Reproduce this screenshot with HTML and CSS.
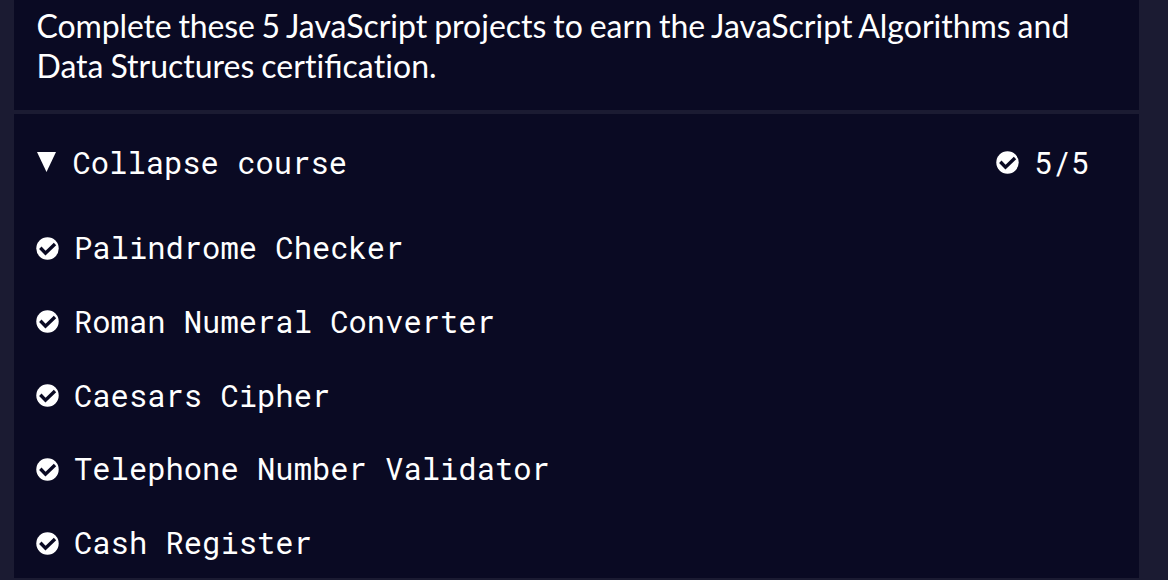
FILE: index.html
```html
<!DOCTYPE html>
<html lang="en">
<head>
<meta charset="utf-8">
<title>Projects</title>
<link rel="stylesheet" href="styles.css">
</head>
<body>
<svg class="defs" width="0" height="0"><symbol id="check" viewBox="0 0 23 23"><circle class="disc" cx="11.5" cy="11.5" r="11.2"/><path class="tick" d="M4.300 10.800 9.500 16.200 19 7"/></symbol></svg>
<main class="block">
<p class="intro"><span class="lead">Complete these 5</span> JavaScript projects to earn the JavaScript Algorithms and<br>Data Structures <span class="plain">certi</span>fica<span class="plain">tion.</span></p>
<section class="course">
<div class="toggle"><svg class="arrow" viewBox="0 0 19 20"><path d="M0 0h19L9.500 20z"/></svg><span class="label">Collapse course</span><svg class="icon"><use href="#check"/></svg><span class="count">5/5</span></div>
<ul class="list">
<li><svg class="icon"><use href="#check"/></svg><span class="name">Palindrome Checker</span></li>
<li><svg class="icon"><use href="#check"/></svg><span class="name">Roman Numeral Converter</span></li>
<li><svg class="icon"><use href="#check"/></svg><span class="name">Caesars Cipher</span></li>
<li><svg class="icon"><use href="#check"/></svg><span class="name">Telephone Number Validator</span></li>
<li><svg class="icon"><use href="#check"/></svg><span class="name">Cash Register</span></li>
</ul>
</section>
</main>
</body>
</html>
```
FILE: styles.css
```css
body { margin: 0; height: 580px; overflow: hidden; background: #1b1b32; color: #fff; }
.defs { display: block; }
.block { width: 1125px; height: 578px; margin-left: 14px; background: #0a0a23; }
.intro { margin: 0; box-sizing: border-box; height: 110px; padding: 6px 0 0 22.500px; font: 32px/40px Lato, sans-serif; word-spacing: -1.300px; white-space: nowrap; }
.lead { letter-spacing: -0.120px; }
.plain { font-variant-ligatures: none; letter-spacing: 0.050px; }
.course { border-top: 4px solid #1b1b32; font: 30.500px/40px "Roboto Mono", "DejaVu Sans Mono", monospace; }
.toggle { display: flex; align-items: center; height: 96px; padding: 0 50px 0 22.500px; }
.arrow { width: 19px; height: 20px; margin-right: 17px; fill: #fff; }
.label { flex: 1; }
.icon { width: 23px; height: 23px; flex: none; }
.disc { fill: #fff; }
.tick { fill: none; stroke: #0a0a23; stroke-width: 3.400; }
.count { margin-left: 15px; }
.list { list-style: none; margin: 0; padding: 1.200px 0 0 22px; }
.list li { display: flex; align-items: center; gap: 15px; height: 73.750px; }
.name { padding-bottom: 2px; }
```
